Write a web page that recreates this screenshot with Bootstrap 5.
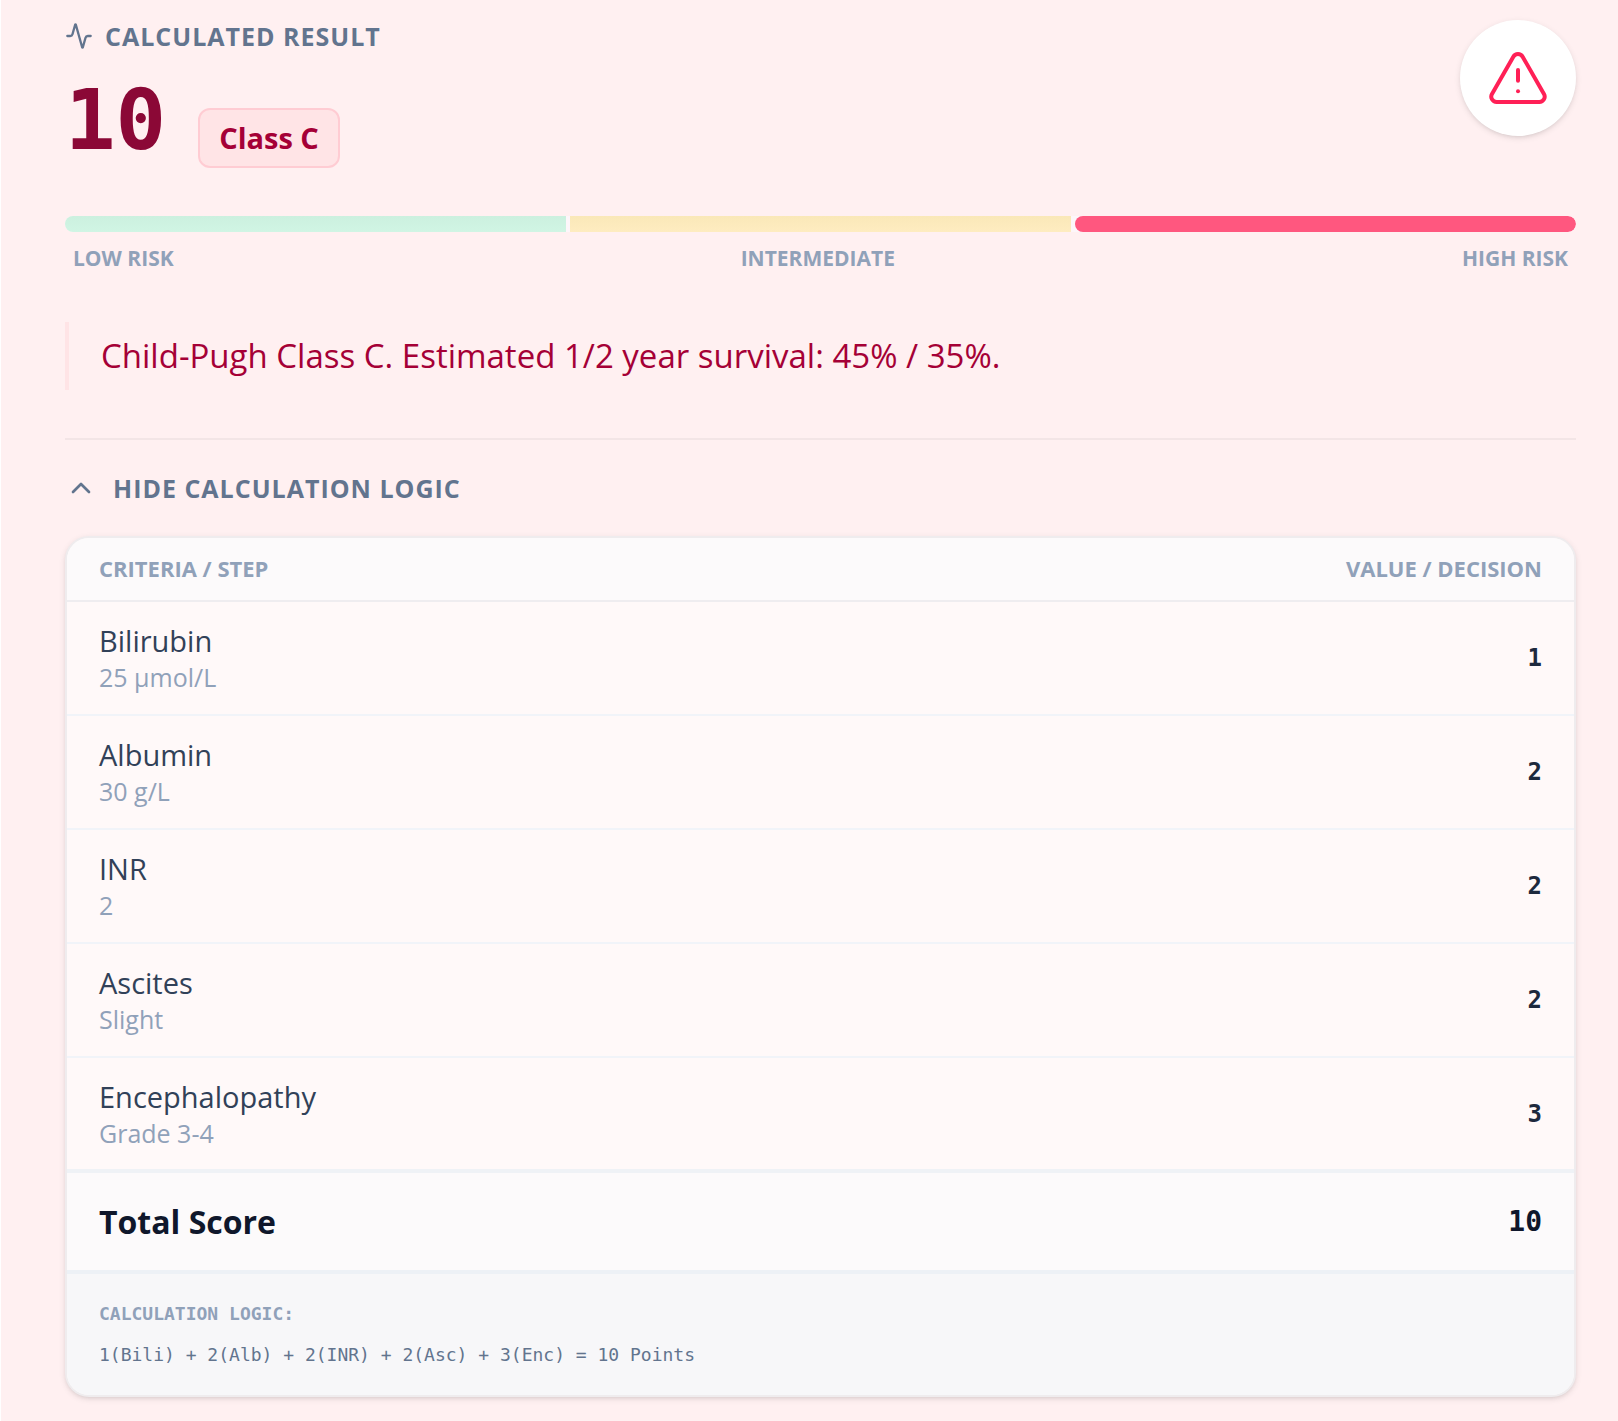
<!DOCTYPE html>
<html lang="en">
<head>
<meta charset="utf-8">
<meta name="viewport" content="width=device-width, initial-scale=1">
<title>Child-Pugh Score</title>
<link href="https://cdn.jsdelivr.net/npm/bootstrap@5.3.0/dist/css/bootstrap.min.css" rel="stylesheet">
<style>
  body { font-family: "Open Sans", "Noto Sans", sans-serif; background: #fff0f1; color: #314158; }
  .result-panel { border-left: 1px solid #fff; padding: 20px 42px 24px 64px; min-height: 100vh; }
  .mono { font-family: "DejaVu Sans Mono", "Liberation Mono", monospace; }
  .section-label { font-size: 25px; line-height: 32px; font-weight: 700; letter-spacing: 1px; color: #62748e; text-transform: uppercase; }
  .score { font-size: 84px; line-height: 104px; font-weight: 700; color: #8b0836; }
  .class-pill { font-size: 29px; line-height: 40px; font-weight: 700; color: #a50036; background: #ffe4e6; border: 2px solid #ffccd3; border-radius: 12px; padding: 8px 19px; margin-top: 36px; }
  .alert-disc { width: 116px; height: 116px; background: #fff; box-shadow: 0 2px 6px rgba(0,0,0,.1), 0 2px 4px -2px rgba(0,0,0,.1); }
  .risk-bar { height: 16px; gap: 4px; border-radius: 8px; background: #fdf6fa; margin-top: 44px; }
  .risk-low { background: linear-gradient(#ccf0df, #d0f5e4); }
  .risk-mid { background: linear-gradient(#fae8b8, #feecc0); }
  .risk-high { background: #ff577f; border-radius: 8px; }
  .small-label { font-size: 21px; line-height: 28px; font-weight: 700; color: #90a1b9; text-transform: uppercase; }
  .finding { font-size: 33px; line-height: 68px; color: #a50036; border-left: 4px solid #ffe4e6; padding-left: 32px; margin: 50px 0 48px; }
  .logic-section { border-top: 2px solid #f3e5e6; padding-top: 32px; }
  .logic-card { margin-top: 32px; border: 2px solid #efecee; border-radius: 24px; background: #fff9f9; box-shadow: 0 2px 6px rgba(0,0,0,.1), 0 2px 4px -2px rgba(0,0,0,.1); }
  .logic-table { width: 100%; border-collapse: collapse; }
  .logic-table th, .logic-table td { padding: 0 32px; }
  .logic-table thead tr { height: 63px; background: #fcfafb; border-bottom: 2px solid #efedf0; }
  .logic-table thead .small-label { font-size: 22px; padding-bottom: 2px; }
  .logic-table tbody tr { height: 114px; border-bottom: 2px solid #f1f4f9; }
  .logic-table tbody th { padding-bottom: 2px; }
  .logic-table tfoot tr { height: 99px; background: #fcfafb; border-top: 4px solid #eff2f6; color: #0f172b; }
  .criterion { display: block; font-size: 29px; line-height: 40px; font-weight: 400; }
  .reading { display: block; font-size: 25px; line-height: 32px; font-weight: 400; color: #90a1b9; }
  .points { font-size: 24px; font-weight: 700; color: #1d293d; }
  .total-label { font-size: 32px; font-weight: 700; }
  .total-points { font-size: 28px; font-weight: 700; }
  .formula { background: #f7f7f9; border-top: 4px solid #edf1f6; padding: 24px 32px; font-size: 18px; line-height: 32px; color: #62748e; }
  .formula-title { color: #90a1b9; font-weight: 700; margin-bottom: 9px; }
</style>
<script src="https://cdn.jsdelivr.net/npm/bootstrap@5.3.0/dist/js/bootstrap.bundle.min.js"></script>
</head>
<body>
<main class="result-panel">
  <header class="d-flex justify-content-between align-items-start">
    <div>
      <h1 class="section-label d-flex align-items-center mb-3">
        <svg class="me-2" width="28" height="28" viewBox="0 0 24 24" fill="none" stroke="currentColor" stroke-width="2" stroke-linecap="round" stroke-linejoin="round" aria-hidden="true"><path d="M22 12h-2.48a2 2 0 0 0-1.93 1.46l-2.35 8.36a.25.25 0 0 1-.48 0L9.24 2.18a.25.25 0 0 0-.48 0l-2.35 8.36A2 2 0 0 1 4.49 12H2"/></svg>
        <span class="ps-1">Calculated Result</span>
      </h1>
      <div class="d-flex align-items-center">
        <span class="score mono me-4">10</span>
        <span class="class-pill ms-2">Class C</span>
      </div>
    </div>
    <div class="alert-disc rounded-circle d-flex align-items-center justify-content-center">
      <svg width="64" height="64" viewBox="0 0 24 24" fill="none" stroke="#ff2056" stroke-width="1.5" stroke-linecap="round" stroke-linejoin="round" role="img" aria-label="Warning"><path d="m21.73 18-8-14a2 2 0 0 0-3.48 0l-8 14A2 2 0 0 0 4 21h16a2 2 0 0 0 1.73-3"/><path d="M12 9v4"/><path d="M12 17h.01"/></svg>
    </div>
  </header>

  <div class="risk-bar d-flex overflow-hidden">
    <div class="risk-low flex-fill"></div>
    <div class="risk-mid flex-fill"></div>
    <div class="risk-high flex-fill"></div>
  </div>
  <div class="small-label d-flex justify-content-between px-2 pt-2 mt-1">
    <span>Low Risk</span><span>Intermediate</span><span>High Risk</span>
  </div>

  <p class="finding">Child-Pugh Class C. Estimated 1/2 year survival: 45% / 35%.</p>

  <section class="logic-section">
    <button type="button" class="section-label btn border-0 p-0 d-flex align-items-center gap-3" data-bs-toggle="collapse" data-bs-target="#logic" aria-expanded="true" aria-controls="logic">
      <svg width="32" height="32" viewBox="0 0 24 24" fill="none" stroke="currentColor" stroke-width="2" stroke-linecap="round" stroke-linejoin="round" aria-hidden="true"><path d="m18 15-6-6-6 6"/></svg>
      <span>Hide Calculation Logic</span>
    </button>
    <div class="collapse show" id="logic">
      <div class="logic-card overflow-hidden">
        <table class="logic-table">
          <thead>
            <tr><th scope="col" class="small-label">Criteria / Step</th><th scope="col" class="small-label text-end">Value / Decision</th></tr>
          </thead>
          <tbody>
            <tr><th scope="row"><span class="criterion">Bilirubin</span><span class="reading">25 µmol/L</span></th><td class="points mono text-end">1</td></tr>
            <tr><th scope="row"><span class="criterion">Albumin</span><span class="reading">30 g/L</span></th><td class="points mono text-end">2</td></tr>
            <tr><th scope="row"><span class="criterion">INR</span><span class="reading">2</span></th><td class="points mono text-end">2</td></tr>
            <tr><th scope="row"><span class="criterion">Ascites</span><span class="reading">Slight</span></th><td class="points mono text-end">2</td></tr>
            <tr><th scope="row"><span class="criterion">Encephalopathy</span><span class="reading">Grade 3-4</span></th><td class="points mono text-end">3</td></tr>
          </tbody>
          <tfoot>
            <tr><th scope="row" class="total-label">Total Score</th><td class="total-points mono text-end">10</td></tr>
          </tfoot>
        </table>
        <div class="formula mono">
          <div class="formula-title text-uppercase">Calculation Logic:</div>
          <div>1(Bili) + 2(Alb) + 2(INR) + 2(Asc) + 3(Enc) = 10 Points</div>
        </div>
      </div>
    </div>
  </section>
</main>
</body>
</html>
